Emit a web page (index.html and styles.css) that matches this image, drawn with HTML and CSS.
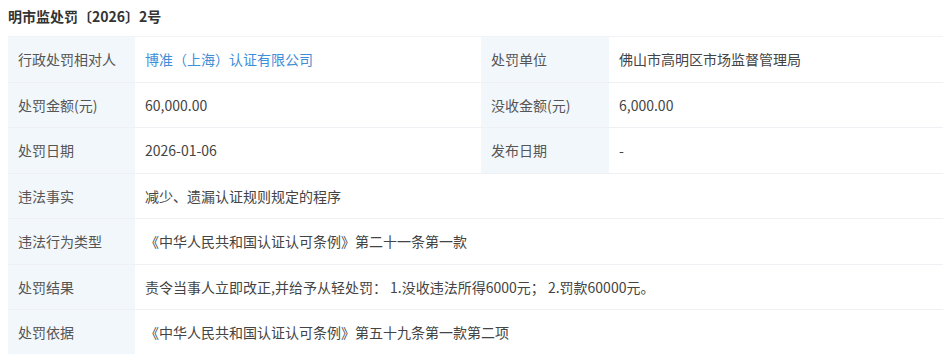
FILE: index.html
```html
<!DOCTYPE html>
<html lang="zh-CN">
<head>
<meta charset="utf-8">
<link rel="stylesheet" href="styles.css">
</head>
<body>
<div class="page">
  <h2 class="title">明市监处罚〔2026〕2号</h2>
  <div class="table">
    <div class="label">行政处罚相对人</div>
    <div class="value"><a class="link">博准（上海）认证有限公司</a></div>
    <div class="label">处罚单位</div>
    <div class="value">佛山市高明区市场监督管理局</div>

    <div class="label">处罚金额(元)</div>
    <div class="value">60,000.00</div>
    <div class="label">没收金额(元)</div>
    <div class="value">6,000.00</div>

    <div class="label">处罚日期</div>
    <div class="value">2026-01-06</div>
    <div class="label">发布日期</div>
    <div class="value">-</div>

    <div class="label">违法事实</div>
    <div class="value wide">减少、遗漏认证规则规定的程序</div>

    <div class="label">违法行为类型</div>
    <div class="value wide">《中华人民共和国认证认可条例》第二十一条第一款</div>

    <div class="label">处罚结果</div>
    <div class="value wide">责令当事人立即改正,并给予从轻处罚： 1.没收违法所得6000元； 2.罚款60000元。</div>

    <div class="label">处罚依据</div>
    <div class="value wide">《中华人民共和国认证认可条例》第五十九条第一款第二项</div>
  </div>
</div>
</body>
</html>
```
FILE: styles.css
```css
html, body {
  margin: 0;
  padding: 0;
  background: #fff;
}
body {
  font-family: "Noto Sans CJK SC", "Noto Sans", sans-serif;
  font-size: 14px;
  color: #444;
}
.page {
  padding: 6px 0 0 8px;
}
.title {
  margin: 0 0 10px 0;
  font-size: 14px;
  line-height: 20px;
  font-weight: bold;
  color: #333;
}
.table {
  display: grid;
  grid-template-columns: 127px 346px 128px 1fr;
  grid-auto-rows: 45.5px;
  border-top: 1px solid #f1f3f6;
}
.label, .value {
  display: flex;
  align-items: center;
  border-bottom: 1px solid #eef0f3;
  box-sizing: border-box;
  white-space: nowrap;
}
.label {
  background: #f2f7fb;
  color: #555;
  padding-left: 10px;
}
.value {
  padding-left: 10px;
  color: #444;
}
.wide {
  grid-column: 2 / 5;
}
.link {
  color: #3f8ed8;
  text-decoration: none;
}
```
